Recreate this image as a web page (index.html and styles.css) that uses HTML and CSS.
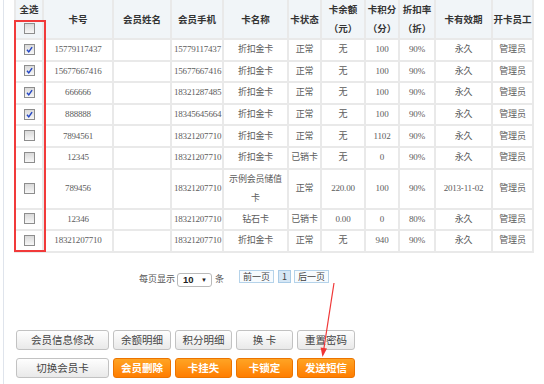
FILE: index.html
```html
<!DOCTYPE html>
<html lang="zh-CN">
<head>
  <meta charset="UTF-8">
  <title>会员卡列表</title>
  <link rel="stylesheet" href="styles.css">
</head>
<body>

  <div class="page">
    <!-- 会员卡列表 -->
    <table class="list">
      <colgroup>
        <col class="w-sel"><col class="w-no"><col class="w-name"><col class="w-tel"><col class="w-card">
        <col class="w-state"><col class="w-money"><col class="w-point"><col class="w-rate"><col class="w-date"><col class="w-staff">
      </colgroup>
      <thead>
        <tr>
          <th>全选<br><span class="cb"></span></th>
          <th>卡号</th>
          <th>会员姓名</th>
          <th>会员手机</th>
          <th>卡名称</th>
          <th>卡状态</th>
          <th>卡余额<br>（元）</th>
          <th>卡积分<br>（分）</th>
          <th>折扣率<br>（折）</th>
          <th>卡有效期</th>
          <th>开卡员工</th>
        </tr>
      </thead>
      <tbody>
        <tr>
          <td><span class="cb on"><svg viewBox="0 0 10 10"><path d="M2.2 5.2 L4.2 7.6 L7.9 2.4"/></svg></span></td>
          <td>15779117437</td><td></td><td>15779117437</td><td>折扣金卡</td><td>正常</td><td>无</td><td>100</td><td>90%</td><td>永久</td><td>管理员</td>
        </tr>
        <tr>
          <td><span class="cb on"><svg viewBox="0 0 10 10"><path d="M2.2 5.2 L4.2 7.6 L7.9 2.4"/></svg></span></td>
          <td>15677667416</td><td></td><td>15677667416</td><td>折扣金卡</td><td>正常</td><td>无</td><td>100</td><td>90%</td><td>永久</td><td>管理员</td>
        </tr>
        <tr>
          <td><span class="cb on"><svg viewBox="0 0 10 10"><path d="M2.2 5.2 L4.2 7.6 L7.9 2.4"/></svg></span></td>
          <td>666666</td><td></td><td>18321287485</td><td>折扣金卡</td><td>正常</td><td>无</td><td>100</td><td>90%</td><td>永久</td><td>管理员</td>
        </tr>
        <tr>
          <td><span class="cb on"><svg viewBox="0 0 10 10"><path d="M2.2 5.2 L4.2 7.6 L7.9 2.4"/></svg></span></td>
          <td>888888</td><td></td><td>18345645664</td><td>折扣金卡</td><td>正常</td><td>无</td><td>100</td><td>90%</td><td>永久</td><td>管理员</td>
        </tr>
        <tr>
          <td><span class="cb"></span></td>
          <td>7894561</td><td></td><td>18321207710</td><td>折扣金卡</td><td>正常</td><td>无</td><td>1102</td><td>90%</td><td>永久</td><td>管理员</td>
        </tr>
        <tr>
          <td><span class="cb"></span></td>
          <td>12345</td><td></td><td>18321207710</td><td>折扣金卡</td><td>已销卡</td><td>无</td><td>0</td><td>90%</td><td>永久</td><td>管理员</td>
        </tr>
        <tr>
          <td><span class="cb"></span></td>
          <td>789456</td><td></td><td>18321207710</td><td>示例会员储值卡</td><td>正常</td><td>220.00</td><td>100</td><td>90%</td><td>2013-11-02</td><td>管理员</td>
        </tr>
        <tr>
          <td><span class="cb"></span></td>
          <td>12346</td><td></td><td>18321207710</td><td>钻石卡</td><td>已销卡</td><td>0.00</td><td>0</td><td>80%</td><td>永久</td><td>管理员</td>
        </tr>
        <tr>
          <td><span class="cb"></span></td>
          <td>18321207710</td><td></td><td>18321207710</td><td>折扣金卡</td><td>正常</td><td>无</td><td>940</td><td>90%</td><td>永久</td><td>管理员</td>
        </tr>
      </tbody>
    </table>

    <!-- 分页 -->
    <div class="pager">
      <span class="per">每页显示</span>
      <span class="select">10<i>▼</i></span>
      <span class="per unit">条</span>
      <a class="pg prev">前一页</a>
      <span class="pg cur">1</span>
      <a class="pg next">后一页</a>
    </div>

    <!-- 操作按钮 -->
    <div class="actions">
      <div class="row">
        <button class="btn wide">会员信息修改</button>
        <button class="btn">余额明细</button>
        <button class="btn">积分明细</button>
        <button class="btn">换 卡</button>
        <button class="btn">重置密码</button>
      </div>
      <div class="row">
        <button class="btn wide">切换会员卡</button>
        <button class="btn hot">会员删除</button>
        <button class="btn hot">卡挂失</button>
        <button class="btn hot">卡锁定</button>
        <button class="btn hot">发送短信</button>
      </div>
    </div>
  </div>

  <!-- 标注 -->
  <div class="mark-box"></div>
  <svg class="mark-arrow" width="544" height="384" viewBox="0 0 544 384">
    <line x1="334" y1="283" x2="323.8" y2="349"/>
    <polygon points="322.5,357 320.6,347.6 327,348.5"/>
  </svg>

</body>
</html>
```

FILE: styles.css
```css
body { margin: 0; background: #fff; color: #444; font-family: "Noto Sans CJK SC", "Liberation Sans", sans-serif; }
.page { margin-left: 3px; border-left: 1px solid #dfe4ec; padding-left: 10px; height: 384px; box-sizing: border-box; }

/* table */
.list { border-collapse: separate; border-spacing: 0; table-layout: fixed; width: 520px; border-left: 2px solid #e9e9e9; }
.list th, .list td { border-right: 2px solid #e9e9e9; border-bottom: 2px solid #e9e9e9; text-align: center; vertical-align: middle; padding: 0 2px; overflow: hidden; }
.list th { background: #f1f5f8; color: #333; font-size: 9.5px; font-weight: bold; line-height: 19px; padding: 0; }
.list td { background: #fff; color: #5c5c5c; font-family: "Liberation Serif", "Noto Sans CJK SC", serif; font-size: 9px; letter-spacing: -0.2px; line-height: 19px; }
.list thead tr { height: 39px; }
.list tbody tr { height: 21.6px; }
.w-sel { width: 28px; } .w-no { width: 70px; } .w-name { width: 58px; } .w-tel { width: 52px; }
.w-card { width: 65px; } .w-state { width: 33px; } .w-money { width: 44px; } .w-point { width: 34px; }
.w-rate { width: 36px; } .w-date { width: 57px; } .w-staff { width: 41px; }

/* checkbox */
.cb { display: inline-block; width: 9px; height: 9px; border: 1px solid #8d8d8d; background: linear-gradient(#d9d9d9, #f7f7f7); vertical-align: middle; position: relative; top: -1px; }
.cb svg { display: block; width: 9px; height: 9px; }
.cb path { fill: none; stroke: #2446c4; stroke-width: 1.6; }

/* pager */
.pager { display: flex; align-items: flex-start; margin-top: 17px; padding-left: 125px; height: 17px; font-size: 9px; color: #555; }
.per { line-height: 17px; }
.unit { margin-left: 3px; }
.select { margin: 3px 0 0 2px; width: 35px; height: 14px; box-sizing: border-box; border: 1px solid #b9b9b9; border-radius: 3px; background: #fff; font: bold 9.5px/12px "Liberation Sans", sans-serif; color: #222; padding-left: 5px; display: flex; justify-content: space-between; }
.select i { font-style: normal; font-size: 6px; padding-right: 4px; }
.pg { width: 35px; height: 13px; box-sizing: border-box; border: 1px solid #b5d3ea; background: #f7fbfe; color: #444; text-align: center; line-height: 11px; font-size: 9px; }
.prev { margin-left: 15px; }
.cur { width: 13px; margin: 0 3px 0 4px; background: #d6e7f5; border-color: #a9cbe6; }

/* buttons */
.actions { margin-top: 43px; padding-left: 2px; display: flex; flex-direction: column; gap: 8px; }
.row { display: flex; gap: 4px; }
.btn { width: 57px; height: 20px; padding: 0; border: 1px solid #c2c2c2; border-radius: 3px; background: linear-gradient(#fefefe, #e9e9e9); color: #444; font-family: "Noto Sans CJK SC", sans-serif; font-size: 10.5px; line-height: 18px; }
.btn.wide { width: 93px; }
.row .btn:nth-child(2), .row .btn:nth-child(5) { width: 58px; }
.btn.hot { background: linear-gradient(#ffa424, #ff7d00); border-color: #eb7400; color: #fff; font-weight: bold; font-size: 10.5px; }

/* annotations */
.mark-box { position: absolute; left: 14px; top: 20px; width: 32px; height: 232px; box-sizing: border-box; border: 2px solid #f13a3a; }
.mark-arrow { position: absolute; left: 0; top: 0; pointer-events: none; }
.mark-arrow line { stroke: #f03636; stroke-width: 1.2; }
.mark-arrow polygon { fill: #f03636; }
```
